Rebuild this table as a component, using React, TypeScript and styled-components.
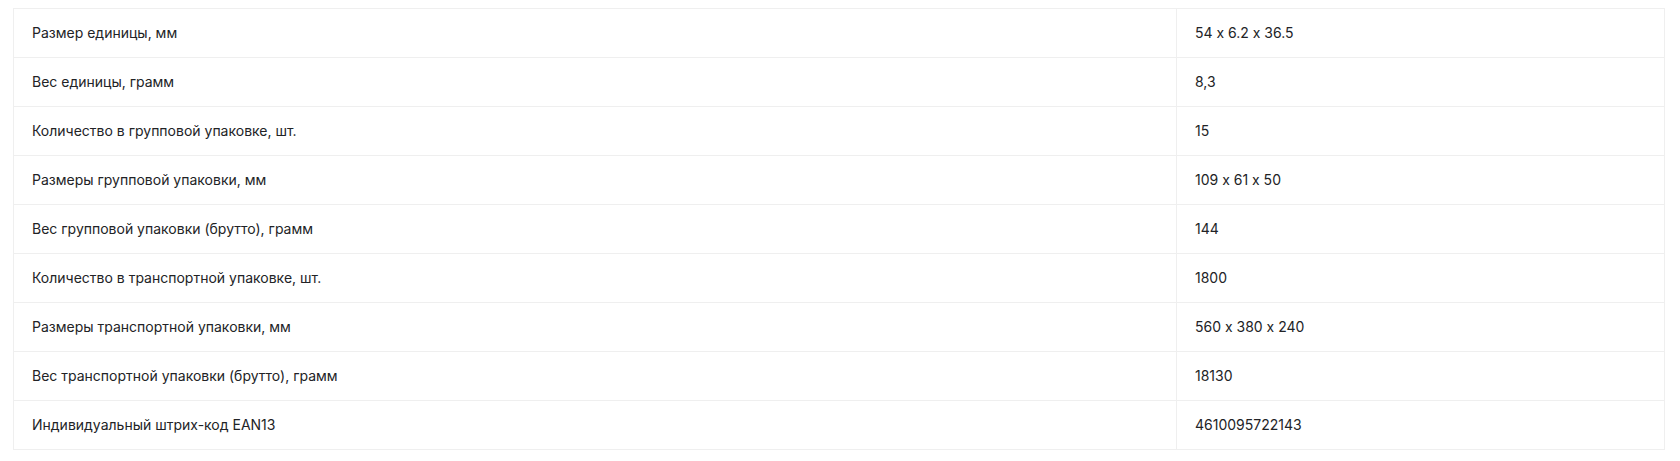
import React from 'react';
import styled, { createGlobalStyle } from 'styled-components';

const GlobalStyle = createGlobalStyle`
  html, body {
    margin: 0;
    padding: 0;
    background: #ffffff;
  }
  body {
    font-family: Inter, "Noto Sans", "Liberation Sans", sans-serif;
    font-feature-settings: "calt" 0;
    -webkit-font-smoothing: antialiased;
  }
`;

const Page = styled.div`
  padding: 8px 15px 0 13px;
`;

const SpecTable = styled.table`
  width: 100%;
  border-collapse: collapse;
  table-layout: fixed;
  border: 1px solid #efefef;
`;

const Row = styled.tr`
  height: 49px;
  border-bottom: 1px solid #efefef;
`;

const Cell = styled.td<{ $label?: boolean }>`
  padding: 0 18px;
  font-size: 14px;
  line-height: 20px;
  color: #222326;
  vertical-align: middle;
  font-feature-settings: "calt" 0;
  width: ${(p) => (p.$label ? '1163px' : 'auto')};
  border-right: ${(p) => (p.$label ? '1px solid #efefef' : 'none')};
  box-sizing: border-box;
`;

const specs: [string, string][] = [
  ['Размер единицы, мм', '54 x 6.2 x 36.5'],
  ['Вес единицы, грамм', '8,3'],
  ['Количество в групповой упаковке, шт.', '15'],
  ['Размеры групповой упаковки, мм', '109 x 61 x 50'],
  ['Вес групповой упаковки (брутто), грамм', '144'],
  ['Количество в транспортной упаковке, шт.', '1800'],
  ['Размеры транспортной упаковки, мм', '560 x 380 x 240'],
  ['Вес транспортной упаковки (брутто), грамм', '18130'],
  ['Индивидуальный штрих-код EAN13', '4610095722143'],
];

export default function App() {
  return (
    <>
      <GlobalStyle />
      <Page>
        <SpecTable>
          <tbody>
            {specs.map(([label, value]) => (
              <Row key={label}>
                <Cell $label>{label}</Cell>
                <Cell>{value}</Cell>
              </Row>
            ))}
          </tbody>
        </SpecTable>
      </Page>
    </>
  );
}
